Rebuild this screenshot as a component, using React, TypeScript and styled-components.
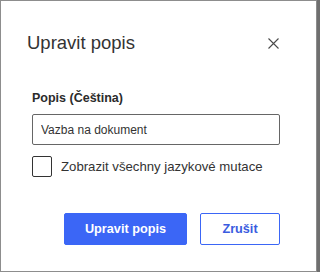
import styled, {createGlobalStyle} from 'styled-components'

const GlobalStyle = createGlobalStyle`
  html, body {
    margin: 0;
    padding: 0;
    background: #6f6f6f;
  }
  body {
    font-family: 'Liberation Sans', Arial, sans-serif;
  }
`

const Dialog = styled.div`
  box-sizing: border-box;
  width: 317px;
  height: 272px;
  background: #fff;
  border: 1px solid #8d8d8d;
  display: flex;
  flex-direction: column;
`

const Header = styled.div`
  display: flex;
  align-items: center;
  justify-content: space-between;
  padding: 31px 37px 0 26px;
`

const Title = styled.h2`
  margin: 0;
  font-size: 18.5px;
  line-height: 22px;
  font-weight: 400;
  color: #333;
`

const CloseButton = styled.button`
  border: 0;
  background: none;
  padding: 0;
  width: 11px;
  height: 11px;
  display: flex;
  cursor: pointer;
`

const Body = styled.div`
  padding: 37px 36px 0 31px;
  display: flex;
  flex-direction: column;
`

const Label = styled.label`
  font-size: 12.5px;
  line-height: 15px;
  font-weight: 700;
  color: #2b2b2b;
  margin-bottom: 8px;
`

const Input = styled.input`
  box-sizing: border-box;
  height: 31px;
  width: 100%;
  border: 1px solid #666;
  border-radius: 2px;
  padding: 0 8px;
  font-family: inherit;
  font-size: 12px;
  color: #333;
  outline: none;
`

const CheckRow = styled.label`
  display: flex;
  align-items: center;
  gap: 9px;
  margin-top: 11px;
  font-size: 13.2px;
  color: #333;
  cursor: pointer;
`

const Box = styled.span`
  box-sizing: border-box;
  width: 20px;
  height: 21px;
  border: 1px solid #333;
  border-radius: 2px;
  flex-shrink: 0;
`

const Footer = styled.div`
  display: flex;
  justify-content: flex-end;
  gap: 13px;
  padding: 0 36px 0 0;
  margin-top: 36px;
`

const Button = styled.button<{$primary?: boolean; $width: number}>`
  box-sizing: border-box;
  height: 32px;
  width: ${(p) => p.$width}px;
  border-radius: 2px;
  border: 1px solid #3b66f6;
  background: ${(p) => (p.$primary ? '#3b66f6' : '#fff')};
  color: ${(p) => (p.$primary ? '#fff' : '#3a5ce0')};
  font-family: inherit;
  font-size: 12.7px;
  font-weight: 700;
  cursor: pointer;
`

export default function App() {
  return (
    <>
      <GlobalStyle />
      <Dialog>
        <Header>
          <Title>Upravit popis</Title>
          <CloseButton aria-label="Zavřít">
            <svg width="11" height="11" viewBox="0 0 11 11">
              <path d="M0.5 0.5 L10.5 10.5 M10.5 0.5 L0.5 10.5" stroke="#4a4a4a" strokeWidth="1.1" fill="none" />
            </svg>
          </CloseButton>
        </Header>
        <Body>
          <Label>Popis (Čeština)</Label>
          <Input defaultValue="Vazba na dokument" />
          <CheckRow>
            <Box />
            Zobrazit všechny jazykové mutace
          </CheckRow>
        </Body>
        <Footer>
          <Button $primary $width={123}>Upravit popis</Button>
          <Button $width={80}>Zrušit</Button>
        </Footer>
      </Dialog>
    </>
  )
}
